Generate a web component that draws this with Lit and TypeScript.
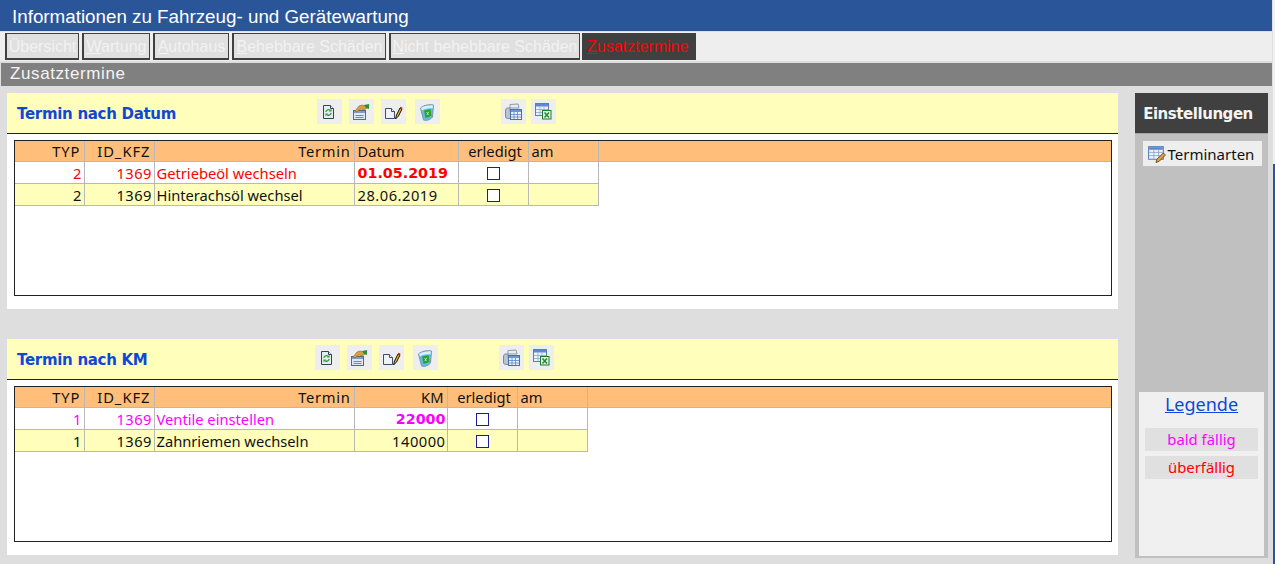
import { LitElement, html, css, svg } from 'lit'
import { customElement, property } from 'lit/decorators.js'

const icons = {
  refresh: svg`<path d="M4.500 4.500h7l3 3v10h-10z" fill="#e4ecf6" stroke="#33425f"/><path d="M11.500 4.500v3h3" fill="#fff" stroke="#33425f"/><path d="M6.800 11a2.800 2.800 0 0 1 4.600-1.600M12.200 12a2.800 2.800 0 0 1-4.600 1.500" fill="none" stroke="#35a02c" stroke-width="1.300"/><path d="M12.600 7.800v2.800h-2.700zM6.400 15.200v-2.800h2.700z" fill="#35a02c"/>`,
  hand: svg`<rect x="2.500" y="9.500" width="12" height="9" fill="#dfe8f5" stroke="#52698f"/><rect x="3" y="10" width="11" height="2" fill="#7d9ccb"/><path d="M4.500 14.500h8M4.500 16.500h8" stroke="#6f88b0"/><path d="M4 10l4-5 3-1 4 1 1 2-3 2-3-1-2 1-2 2z" fill="#d99f3c" stroke="#8f6a26" stroke-width=".6"/><path d="M13 4l5-1v5l-3-1z" fill="#2d8f34"/>`,
  edit: svg`<path d="M2.500 7.500h6l3 3v7h-9z" fill="#edf1f8" stroke="#3d4d6b"/><path d="M8.500 7.500v3h3" fill="#fff" stroke="#3d4d6b"/><path d="M12.500 18l1-4 3.500-7 2 1-3.500 7z" fill="#e4b21e" stroke="#161616"/><path d="M17.200 6.500l2 1" stroke="#b82020" stroke-width="1.500"/>`,
  bin: svg`<path d="M3.500 7c3-3 10-4 13-3l-1 12c-2 3-7 4-9 3z" fill="#5fbce6" stroke="#7f95aa"/><path d="M4 7c3-2 9-3 12-2.500l-.4 3C12 7 8 8 5 9.500z" fill="#d8f0fb"/><path d="M7 9.500l6.500-1.500 1 7-6 2z" fill="#2aa330"/><path d="M9.500 11l2 3M11.800 10.800l-2 3.200" stroke="#c8f0c8" stroke-width=".8"/>`,
  print: svg`<path d="M7 3.500l8-.5 1 4H7z" fill="#e8ecf2" stroke="#8e9aaa"/><path d="M7 7H4.500C3 7 2.500 8 2.500 10v5c0 2 1 2.500 2 2.500H8z" fill="#b9c3d1" stroke="#7c8a9c"/><rect x="7.500" y="8.500" width="11" height="10" fill="#e9f0fb" stroke="#4a70ac"/><rect x="8" y="9" width="10" height="2" fill="#6f96d4"/><path d="M8 13.500h10M8 16h10M11 11v7M14.500 11v7" stroke="#5f88c8" stroke-width=".8"/>`,
  excel: svg`<rect x="2.500" y="2.500" width="13" height="12" fill="#eef3fb" stroke="#5b7fb4"/><rect x="3" y="3" width="12" height="2.500" fill="#5c8ad0"/><path d="M3 8.500h12M3 11.500h12M7 5.500v9M11 5.500v9" stroke="#8aa4cc" stroke-width=".8"/><rect x="9.500" y="9.500" width="8.500" height="8.500" fill="#e7f3e6" stroke="#1d7a2a"/><path d="M11.500 11.500l4.500 5M16 11.500l-4.500 5" stroke="#1f8a30" stroke-width="1.500"/>`,
  types: svg`<rect x="1.500" y="2.500" width="14" height="12" fill="#eef3fb" stroke="#5b7fb4"/><rect x="2" y="3" width="13" height="2.500" fill="#5c8ad0"/><path d="M2 8h13M2 11h13M6.500 5.500v9M11 5.500v9" stroke="#8aa4cc" stroke-width=".8"/><path d="M8.500 17.500l1-3 6-6 2 2-6 6z" fill="#e8a030" stroke="#5a3a18" stroke-width=".8"/>`,
}

const tabs = [
  { key: '', rest: 'Übersicht', width: 74 },
  { key: 'W', rest: 'artung', width: 68 },
  { key: 'A', rest: 'utohaus', width: 76 },
  { key: 'B', rest: 'ehebbare Schäden', width: 154 },
  { key: 'N', rest: 'icht behebbare Schäden', width: 191 },
]

@customElement('termin-section')
class TerminSection extends LitElement {
  @property() heading = ''
  @property({ type: Number }) toolbarLeft = 0
  @property() valueHead = ''
  @property() valueAlign = 'left'
  @property({ type: Number }) valueWidth = 104
  @property({ attribute: false }) rows: { typ: string; termin: string; value: string; tone: string }[] = []

  static styles = css`
    :host { display: block; height: 216px; background: #fff; }
    .head {
      height: 40px;
      background: #ffffbb;
      border-bottom: 1px solid #222;
      display: flex;
      align-items: center;
      position: relative;
    }
    h2 {
      margin: 2px 0 0 10px;
      font: bold 15px 'DejaVu Sans', sans-serif;
      letter-spacing: -0.3px;
      color: #0f48d8;
    }
    .tools { position: absolute; top: 6px; display: flex; }
    .tile { width: 25px; height: 25px; background: #eeeeee; display: flex; align-items: center; justify-content: center; margin-right: 7px; }
    .tile.wide { margin-right: 9px; }
    .tile.far { margin-right: 61px; }
    .tile.near { margin-right: 5px; }
    .tile svg { width: 21px; height: 21px; }
    .box { margin: 6px 6px 0 7px; height: 154px; border: 1px solid #222; position: relative; background: #fff; }
    .band { position: absolute; left: 0; right: 0; top: 0; height: 21px; background: #ffbf7a; border-bottom: 1px solid #b8b8b8; box-sizing: border-box; }
    table { position: relative; border-collapse: collapse; table-layout: fixed; font: 14.700px 'Noto Sans', sans-serif; color: #111; }
    th { background: #ffbf7a; font-weight: normal; height: 20px; padding: 0 3px; border-right: 1px solid #b8b8b8; border-bottom: 1px solid #b8b8b8; white-space: nowrap; overflow: hidden; }
    td { height: 21px; padding: 0 2px; border-right: 1px solid #b8b8b8; border-bottom: 1px solid #b8b8b8; white-space: nowrap; overflow: hidden; }
    .r { text-align: right; }
    .l { text-align: left; }
    .c { text-align: center; }
    th.c { padding-left: 5px; padding-right: 1px; }
    .caps { letter-spacing: 1px; }
    .term { letter-spacing: 0.7px; }
    td.num { letter-spacing: 0.5px; padding-right: 1.500px; }
    tr.alt td { background: #ffffbb; }
    tr.over td { color: #ff0000; }
    tr.soon td { color: #ff00ff; }
    td.val { letter-spacing: 0.5px; padding-left: 3px; padding-right: 1px; }
    tr.over td.val, tr.soon td.val { font: bold 14.300px 'DejaVu Sans', sans-serif; letter-spacing: 0; }
    .check { display: inline-block; width: 11px; height: 11px; border: 1px solid #1c1c9c; background: #fff; vertical-align: -1px; }
  `

  render() {
    const side = this.valueAlign === 'right' ? 'r' : 'l'
    return html`
      <div class="head">
        <h2>${this.heading}</h2>
        <div class="tools" style="left:${this.toolbarLeft}px">
          <span class="tile"><svg viewBox="0 0 21 21">${icons.refresh}</svg></span>
          <span class="tile"><svg viewBox="0 0 21 21">${icons.hand}</svg></span>
          <span class="tile wide"><svg viewBox="0 0 21 21">${icons.edit}</svg></span>
          <span class="tile far"><svg viewBox="0 0 21 21">${icons.bin}</svg></span>
          <span class="tile near"><svg viewBox="0 0 21 21">${icons.print}</svg></span>
          <span class="tile"><svg viewBox="0 0 21 21">${icons.excel}</svg></span>
        </div>
      </div>
      <div class="box">
        <div class="band"></div>
        <table>
          <colgroup>
            <col style="width:69px" /><col style="width:70px" /><col style="width:200px" />
            <col style="width:${this.valueWidth}px" /><col style="width:70px" /><col style="width:70px" />
          </colgroup>
          <tr>
            <th class="r caps">TYP</th>
            <th class="r caps">ID_KFZ</th>
            <th class="r term">Termin</th>
            <th class=${side}>${this.valueHead}</th>
            <th class="c">erledigt</th>
            <th class="l">am</th>
          </tr>
          ${this.rows.map(
            (row, i) => html`
              <tr class="${i % 2 ? 'alt' : ''} ${row.tone}">
                <td class="r num">${row.typ}</td>
                <td class="r num">1369</td>
                <td class="l">${row.termin}</td>
                <td class="val ${side}">${row.value}</td>
                <td class="c"><span class="check"></span></td>
                <td></td>
              </tr>
            `
          )}
        </table>
      </div>
    `
  }
}

@customElement('app-root')
export class AppRoot extends LitElement {
  static styles = css`
    :host { display: block; width: 1275px; height: 564px; overflow: hidden; background: #dedede; font-family: 'Liberation Sans', sans-serif; position: relative; }
    .title {
      height: 31px;
      margin-right: 3px;
      background: #2a5599;
      color: #fff;
      font-size: 18.800px;
      line-height: 34px;
      padding-left: 12px;
      box-sizing: border-box;
    }
    .tabs {
      margin: 1px 3px 0 0;
      height: 29px;
      padding: 1px 0 0 5px;
      background: #eeeeee;
      display: flex;
      box-sizing: border-box;
    }
    .tab {
      height: 27px;
      box-sizing: border-box;
      margin-right: 3px;
      background: #e0e0e0;
      border: 1px solid #404040;
      border-width: 1px 1px 2px 2px;
      color: #f2f2f2;
      font-size: 16px;
      line-height: 26px;
      text-align: center;
      white-space: nowrap;
      overflow: hidden;
    }
    .tab u { text-decoration-thickness: 1px; }
    .tab.active { width: 114px; background: #404040; color: #ff0000; margin-left: -1px; padding-left: 3px; text-align: left; }
    .sub {
      margin: 2px 3px 0 1px;
      height: 23px;
      background: #808080;
      color: #f4f4f4;
      font-size: 17px;
      line-height: 22px;
      padding-left: 9px;
      letter-spacing: 0.6px;
    }
    .main { display: flex; padding: 7px 0 0 7px; }
    .sections { width: 1111px; display: flex; flex-direction: column; gap: 30px; }
    .side {
      margin-left: 17px;
      width: 133px;
      height: 465px;
      background: #c0c0c0;
      display: flex;
      flex-direction: column;
      align-items: center;
    }
    .side h3 {
      margin: 0;
      width: 100%;
      height: 41px;
      padding-right: 7px;
      background: #404040;
      border-bottom: 1px solid #8aa8c8;
      box-sizing: border-box;
      color: #f4f4f4;
      font: bold 15px/42px 'DejaVu Sans', sans-serif;
      letter-spacing: -0.45px;
      text-align: center;
    }
    .btn {
      margin: 7px 0 0 1px;
      width: 119px;
      height: 25px;
      padding-left: 4px;
      box-sizing: border-box;
      background: #eeeeee;
      display: flex;
      align-items: center;
      gap: 1px;
      font: 15px 'Noto Sans', sans-serif;
      color: #111;
    }
    .btn svg { width: 20px; height: 20px; }
    .legend {
      margin-top: auto;
      margin-bottom: 2px;
      width: 125px;
      height: 164px;
      background: #f0f0f0;
      display: flex;
      flex-direction: column;
      align-items: center;
      font: 14.900px 'Noto Sans', sans-serif;
    }
    .legend a { margin: 0 0 12px; color: #0f48d8; font-size: 18px; line-height: 24px; text-decoration: underline; }
    .chip { width: 113px; height: 23px; margin-bottom: 5px; background: #e0e0e0; text-align: center; line-height: 23px; }
    .soon { color: #ff00ff; }
    .over { color: #ff0000; }
    .edge-top { position: absolute; right: 0; top: 0; height: 164px; width: 2px; background: #f0f0f0; }
    .edge { position: absolute; right: 0; top: 164px; bottom: 0; width: 2px; background: #2a5599; }
  `

  render() {
    return html`
      <div class="title">Informationen zu Fahrzeug- und Gerätewartung</div>
      <nav class="tabs">
        ${tabs.map(
          (tab) => html`<span class="tab" style="width:${tab.width}px">${tab.key ? html`<u>${tab.key}</u>` : ''}${tab.rest}</span>`
        )}
        <span class="tab active"><u>Z</u>usatztermine</span>
      </nav>
      <div class="sub">Zusatztermine</div>
      <div class="main">
        <div class="sections">
          <termin-section
            heading="Termin nach Datum"
            .toolbarLeft=${310}
            valueHead="Datum"
            valueAlign="left"
            .valueWidth=${104}
            .rows=${[
              { typ: '2', termin: 'Getriebeöl wechseln', value: '01.05.2019', tone: 'over' },
              { typ: '2', termin: 'Hinterachsöl wechsel', value: '28.06.2019', tone: 'plain' },
            ]}
          ></termin-section>
          <termin-section
            heading="Termin nach KM"
            .toolbarLeft=${308}
            valueHead="KM"
            valueAlign="right"
            .valueWidth=${93}
            .rows=${[
              { typ: '1', termin: 'Ventile einstellen', value: '22000', tone: 'soon' },
              { typ: '1', termin: 'Zahnriemen wechseln', value: '140000', tone: 'plain' },
            ]}
          ></termin-section>
        </div>
        <aside class="side">
          <h3>Einstellungen</h3>
          <div class="btn"><svg viewBox="0 0 19 19">${icons.types}</svg>Terminarten</div>
          <div class="legend">
            <a>Legende</a>
            <div class="chip soon">bald fällig</div>
            <div class="chip over">überfällig</div>
          </div>
        </aside>
      </div>
      <div class="edge-top"></div>
      <div class="edge"></div>
    `
  }
}
